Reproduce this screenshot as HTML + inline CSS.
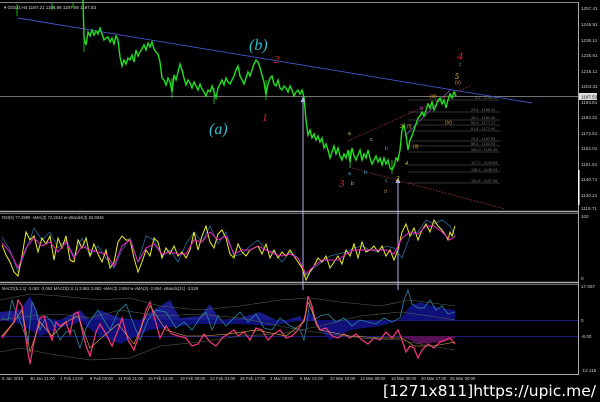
<!DOCTYPE html>
<html><head><style>
html,body{margin:0;padding:0;background:#000;}
svg{display:block}
</style></head><body>
<svg width="600" height="402" viewBox="0 0 600 402" xmlns="http://www.w3.org/2000/svg" font-family="Liberation Sans, sans-serif">
<rect width="600" height="402" fill="#000"/>
<line x1="0" y1="2.5" x2="578" y2="2.5" stroke="#888" stroke-width="1"/>
<line x1="578.5" y1="2" x2="578.5" y2="375" stroke="#aaa" stroke-width="1"/>
<line x1="0" y1="211.5" x2="578" y2="211.5" stroke="#aaa" stroke-width="1.5"/>
<line x1="0" y1="213.5" x2="578" y2="213.5" stroke="#666" stroke-width="1"/>
<line x1="0" y1="282.5" x2="578" y2="282.5" stroke="#aaa" stroke-width="1.5"/>
<line x1="0" y1="284.5" x2="578" y2="284.5" stroke="#666" stroke-width="1"/>
<line x1="0" y1="374.5" x2="578" y2="374.5" stroke="#aaa" stroke-width="1"/>
<text x="4" y="9" font-size="4.5" fill="#ddd">▾ GOLD,H4  1197.21 1198.96 1197.09 1197.53</text>

<line x1="0" y1="96.5" x2="578" y2="96.5" stroke="#999" stroke-width="0.8"/>
<line x1="18" y1="18" x2="532" y2="103" stroke="#4455cc" stroke-width="0.9"/>
<line x1="348" y1="141" x2="470" y2="86" stroke="#a33" stroke-width="0.8" stroke-dasharray="1.5,1.5"/>
<line x1="352" y1="168" x2="505" y2="209" stroke="#a33" stroke-width="0.8" stroke-dasharray="1.5,1.5"/>
<line x1="405" y1="136" x2="450" y2="90" stroke="#8866cc" stroke-width="0.7"/>
<g stroke="#666" stroke-width="0.6">
<line x1="408" y1="100" x2="500" y2="100"/><line x1="408" y1="112" x2="500" y2="112"/>
<line x1="408" y1="120" x2="500" y2="120"/><line x1="408" y1="125" x2="500" y2="125"/>
<line x1="408" y1="131" x2="500" y2="131"/><line x1="408" y1="141" x2="500" y2="141"/>
<line x1="408" y1="146" x2="500" y2="146"/><line x1="408" y1="152" x2="500" y2="152"/>
<line x1="408" y1="165" x2="500" y2="165"/><line x1="408" y1="172" x2="500" y2="172"/>
<line x1="408" y1="183" x2="500" y2="183"/>
</g>
<g font-size="3.8" fill="#777">
<text x="475" y="99">0.0 - 1198.00</text><text x="471" y="111">23.6 - 1186.93</text>
<text x="471" y="119">38.2 - 1181.36</text><text x="471" y="124">50.0 - 1177.17</text>
<text x="471" y="130">61.8 - 1172.99</text><text x="471" y="140">76.4 - 1167.69</text>
<text x="471" y="145">88.6 - 1163.93</text><text x="471" y="151">100.0 - 1159.46</text>
<text x="471" y="164">127.2 - 1149.83</text><text x="471" y="171">138.2 - 1145.93</text>
<text x="471" y="182">161.8 - 1137.56</text>
</g>

<polyline fill="none" stroke="#22dd22" stroke-width="1.4" points="83,0 84,38 86,45 88,32 90,36 92,30 94,35 96,31 98,34 100,28 102,34 104,40 106,38 108,37 110,42 112,38 114,44 116,36 118,40 120,57 122,66 124,60 126,64 128,58 130,60 132,55 134,62 136,50 138,56 140,52 142,49 144,45 146,50 148,43 150,47 152,42 154,49 156,52 158,54 160,62 162,78 164,80 166,85 168,78 170,82 172,92 174,75 176,80 178,72 180,64 182,70 184,78 186,85 188,80 190,83 192,88 194,82 196,86 198,90 200,84 202,89 204,92 206,96 208,90 210,92 212,86 214,92 216,98 218,88 220,84 222,80 224,85 226,78 228,82 230,84 232,80 234,76 236,70 238,66 240,76 242,80 244,84 246,78 248,72 250,76 252,70 254,64 256,60 258,62 260,68 262,75 264,82 266,95 268,84 270,78 272,76 274,84 276,86 278,80 280,88 282,90 284,86 286,88 288,92 290,86 292,90 294,96 296,92 298,90 300,94 302,90 304,97 306,120 308,135 310,130 312,138 314,134 316,140 318,136 320,142 322,138 324,148 326,144 328,150 330,158 332,152 334,146 336,154 338,148 340,156 342,160 344,154 346,158 348,150 350,162 352,148 354,156 356,160 358,155 360,150 362,160 364,154 366,158 368,150 370,158 372,164 374,160 376,156 378,162 380,158 382,165 384,158 386,164 388,160 390,168 392,170 394,166 396,158 398,160 400,150 402,130 404,125 406,135 408,150 410,140 412,136 414,130 416,124 418,118 420,116 422,112 424,116 426,110 428,104 430,108 432,102 434,110 436,106 438,100 440,98 442,104 444,100 446,108 448,100 450,94 452,98 454,92 456,96"/>
<g stroke="#22dd22" stroke-width="0.8">
<line x1="84" y1="30" x2="84" y2="52"/><line x1="172" y1="78" x2="172" y2="98"/><line x1="214" y1="88" x2="214" y2="104"/><line x1="266" y1="80" x2="266" y2="100"/><line x1="350" y1="150" x2="350" y2="168"/><line x1="392" y1="160" x2="392" y2="174"/>
<line x1="17" y1="4" x2="17" y2="16"/><line x1="52" y1="3" x2="52" y2="10"/><line x1="73" y1="3" x2="73" y2="8"/>
</g>

<line x1="303" y1="97" x2="303" y2="290" stroke="#b0b0ee" stroke-width="1"/>
<line x1="398" y1="178" x2="398" y2="290" stroke="#b0b0ee" stroke-width="1"/>
<polygon points="303,97 300.5,102 305.5,102" fill="#b0b0ee"/>
<polygon points="398,178 395.5,183 400.5,183" fill="#b0b0ee"/>

<g style="font-family:'Liberation Serif',serif;font-style:italic">
<text x="209" y="134" font-size="16" fill="#33bbcc">(a)</text>
<text x="249" y="50" font-size="16" fill="#33bbcc">(b)</text>
<text x="274" y="63" font-size="11" fill="#dd2222">2</text>
<text x="262" y="121" font-size="11" fill="#dd2222">1</text>
<text x="339" y="187" font-size="11" fill="#dd2222">3</text>
<text x="457" y="60" font-size="12" fill="#dd2222">4</text>
<text x="455" y="79" font-size="8" fill="#eedd22">5</text>
<text x="400" y="128" font-size="6" fill="#eedd22">3</text>
<text x="396" y="162" font-size="6" fill="#eedd22">1</text>
<text x="405" y="165" font-size="6" fill="#eedd22">4</text>
<text x="396" y="181" font-size="7" fill="#eedd22">2</text>
</g>
<g font-size="5" fill="#ccc">
<text x="348" y="135" fill="#cccc66">a</text><text x="370" y="141" fill="#cccc66">c</text>
<text x="351" y="185" fill="#cccc66">b</text><text x="384" y="193" fill="#aa8844">d</text>
<text x="348" y="175" fill="#44aacc">a</text><text x="364" y="174" fill="#44aacc">b</text>
<text x="385" y="150" fill="#44aacc">b</text><text x="385" y="182" fill="#44aacc">c</text>
<text x="407" y="128" fill="#dd9933">(i)</text><text x="413" y="148" fill="#dd9933">(ii)</text>
<text x="430" y="98" fill="#dd9933">(iii)</text><text x="445" y="124" fill="#dd9933">(iv)</text>
<text x="455" y="84" fill="#dd9933">(v)</text><text x="420" y="110" fill="#cc44cc">iii</text>
<text x="459" y="66" fill="#44aacc">c</text>
</g>

<g font-size="4.6" fill="#ccc">
<text x="581" y="10">1257.41</text><text x="581" y="26">1246.91</text><text x="581" y="42">1236.11</text>
<text x="581" y="57">1225.61</text><text x="581" y="73">1215.11</text><text x="581" y="88">1204.31</text>
<text x="581" y="104">1193.81</text><text x="581" y="119">1183.31</text><text x="581" y="135">1172.51</text>
<text x="581" y="150">1162.01</text><text x="581" y="166">1151.51</text><text x="581" y="181">1140.71</text>
<text x="581" y="197">1130.21</text><text x="581" y="210">1119.71</text>
<text x="581" y="218">100</text><text x="581" y="280">0</text>
<text x="581" y="288">17.067</text><text x="581" y="322">0</text><text x="581" y="338">-8.00</text><text x="581" y="372">-12.115</text>
</g>
<rect x="579" y="93" width="18" height="7" fill="#ddd"/>
<text x="581" y="98.5" font-size="4.6" fill="#000">1197.53</text>
<rect x="578" y="170" width="1.5" height="35" fill="#fff"/>

<text x="2" y="219" font-size="4.2" fill="#ccc">RSI(5) 77.4999  -vMA(3) 72.2042  w-vBands(3) 63.9046</text>
<polyline fill="none" stroke="#2a6a9a" stroke-width="0.8" points="2,237 10,250 18,272 26,250 34,228 42,240 50,232 58,248 66,240 74,256 82,238 90,256 98,246 106,258 114,268 122,250 130,238 138,262 146,236 154,240 162,256 170,250 178,262 186,244 194,232 202,242 210,226 218,244 226,232 234,256 242,254 250,246 258,240 266,250 274,252 282,262 290,252 298,258 306,276 314,268 322,262 330,256 338,254 346,252 354,248 362,246 370,250 378,252 386,246 394,248 402,258 410,236 418,232 426,220 434,224 442,220 450,226 455,236"/>
<polyline fill="none" stroke="#eeee22" stroke-width="1" points="2,245 6,255 10,262 14,272 18,276 22,256 26,232 30,240 34,236 38,252 42,238 46,244 50,236 54,260 58,238 62,248 66,236 70,260 74,262 78,240 82,248 86,238 90,256 94,244 98,254 102,262 106,250 110,268 114,262 118,242 122,236 126,240 130,240 134,258 138,272 142,262 146,250 150,256 154,238 158,242 162,258 166,248 170,254 174,246 178,256 182,252 186,258 190,250 194,232 198,250 202,236 206,226 210,242 214,248 218,234 222,230 226,238 230,254 234,258 238,244 242,252 246,256 250,250 254,248 258,246 262,254 266,244 270,258 274,250 278,258 282,252 286,256 290,250 294,256 298,262 302,268 306,280 310,272 314,266 318,258 322,262 326,256 330,268 334,262 338,256 342,264 346,250 350,256 354,244 358,258 362,242 366,252 370,250 374,246 378,252 382,246 386,256 390,250 394,260 398,250 402,232 406,224 410,236 414,228 418,240 422,230 426,224 430,232 434,220 438,226 442,230 446,236 448,240 450,232 452,236 455,226"/>
<polyline fill="none" stroke="#ee22cc" stroke-width="1" points="2,243 10,252 18,268 26,248 34,238 42,246 50,242 58,252 66,242 74,258 82,246 90,250 98,252 106,254 114,266 122,246 130,240 138,262 146,248 154,244 162,254 170,252 178,254 186,254 194,240 202,242 210,232 218,240 226,236 234,254 242,250 250,250 258,246 266,250 274,254 282,256 290,254 298,258 306,274 314,266 322,260 330,260 338,260 346,254 354,250 362,250 370,250 378,250 386,250 394,254 402,238 410,232 418,234 426,226 434,226 442,232 450,240 455,236"/>

<text x="2" y="290" font-size="4.2" fill="#ccc">MACD(5,2,1) -3.062 -3.062  MACD(2,0,1) 3.862 3.862  -vMA(3) 2.894  w-vMA(3) -2.894  -vBands(21) -3.529</text>
<line x1="0" y1="320.5" x2="578" y2="320.5" stroke="#2222aa" stroke-width="0.8"/>
<line x1="0" y1="336.5" x2="578" y2="336.5" stroke="#2222aa" stroke-width="0.8"/>
<path d="M0,320 L0,312 20,310 30,296 40,318 60,320 80,310 90,320 100,310 120,318 140,320 150,312 170,300 180,318 200,316 210,304 220,320 240,318 260,312 280,322 300,316 303,320 Z" fill="#1a1a88"/>
<path d="M0,320 L20,324 40,336 60,328 80,322 100,336 120,344 150,330 180,326 200,324 240,324 270,326 303,320 310,312 320,330 330,340 350,330 380,326 400,320 410,306 420,302 440,308 455,310 455,320 Z" fill="#10107a"/>
<path d="M400,336 L410,340 420,344 440,342 455,338 455,336 Z" fill="#551155"/>
<polyline fill="none" stroke="#2a7a9a" stroke-width="0.9" points="2,318 8,320 12,300 16,312 22,326 28,344 32,302 36,310 40,330 46,316 52,322 60,340 66,332 74,330 80,348 86,328 92,318 98,310 104,320 110,330 118,312 126,304 132,320 140,340 148,320 156,310 166,312 176,328 184,322 192,330 200,318 206,312 212,330 218,316 226,326 234,318 240,312 248,322 256,314 264,328 272,330 280,318 290,326 300,330 304,340 306,330 310,300 314,320 320,316 328,314 336,322 344,318 352,326 360,320 368,322 376,324 384,318 392,322 400,318 404,300 408,290 412,304 418,308 424,308 430,300 436,310 442,306 448,314 455,312"/>
<polyline fill="none" stroke="#ee3377" stroke-width="1.3" points="2,338 8,330 14,322 18,300 22,306 26,340 30,364 34,342 40,318 44,316 48,330 52,340 56,322 60,326 66,322 70,334 74,314 78,312 82,330 86,346 90,356 96,332 100,324 106,334 112,346 118,330 122,318 128,340 134,350 140,332 146,310 150,302 154,316 160,338 166,326 172,334 178,336 186,338 192,346 198,344 204,334 210,342 216,346 222,338 228,334 234,330 238,336 244,332 250,340 256,328 262,330 268,340 274,334 280,330 286,338 292,336 298,330 304,320 306,312 308,296 312,306 316,324 320,330 326,328 332,336 338,338 344,334 350,338 356,334 362,340 368,344 374,338 380,340 386,332 392,338 398,330 402,340 406,352 410,346 414,348 418,358 422,350 428,344 434,348 440,342 446,340 450,338 455,344"/>
<polyline fill="none" stroke="#eeaa44" stroke-width="0.6" points="2,336 14,322 22,310 30,352 40,322 52,336 66,322 78,316 90,348 106,334 118,324 134,344 150,306 166,330 186,336 204,336 228,334 256,330 286,336 304,322 308,302 320,330 350,336 380,338 402,338 414,346 434,346 455,342"/>
<polyline fill="none" stroke="#556655" stroke-width="0.6" points="0,320 30,316 60,314 90,318 120,310 160,316 200,314 240,318 270,324 300,330 330,334 360,338 400,340 430,346 455,350"/>
<polyline fill="none" stroke="#556655" stroke-width="0.6" points="0,352 20,348 50,354 90,360 130,358 160,346 200,342 240,336 280,334 320,326 360,316 400,312 430,316 455,320"/>
<polyline fill="none" stroke="#556655" stroke-width="0.6" points="0,300 30,294 60,296 100,300 130,298 160,306 200,310 240,306 280,300 310,298 340,302 380,306 410,300 455,306"/>

<g font-size="4.3" fill="#ccc">
<text x="2" y="380">8 Jan 2015</text><text x="30" y="380">30 Jan 21:00</text><text x="60" y="380">4 Feb 13:00</text>
<text x="90" y="380">9 Feb 05:00</text><text x="118" y="380">11 Feb 21:00</text><text x="148" y="380">16 Feb 13:00</text>
<text x="180" y="380">19 Feb 09:00</text><text x="210" y="380">24 Feb 01:00</text><text x="240" y="380">26 Feb 17:00</text>
<text x="270" y="380">3 Mar 09:00</text><text x="300" y="380">6 Mar 01:00</text><text x="330" y="380">10 Mar 16:00</text>
<text x="360" y="380">13 Mar 09:00</text><text x="391" y="380">18 Mar 00:00</text><text x="421" y="380">20 Mar 17:00</text>
<text x="450" y="380">25 Mar 00:00</text>
</g>
<text x="383" y="396" font-size="15" fill="#fff" style="font-family:'Liberation Sans Narrow','DejaVu Sans Condensed',sans-serif" textLength="213" lengthAdjust="spacingAndGlyphs">[1271x811]https://upic.me/</text>
</svg>
</body></html>
